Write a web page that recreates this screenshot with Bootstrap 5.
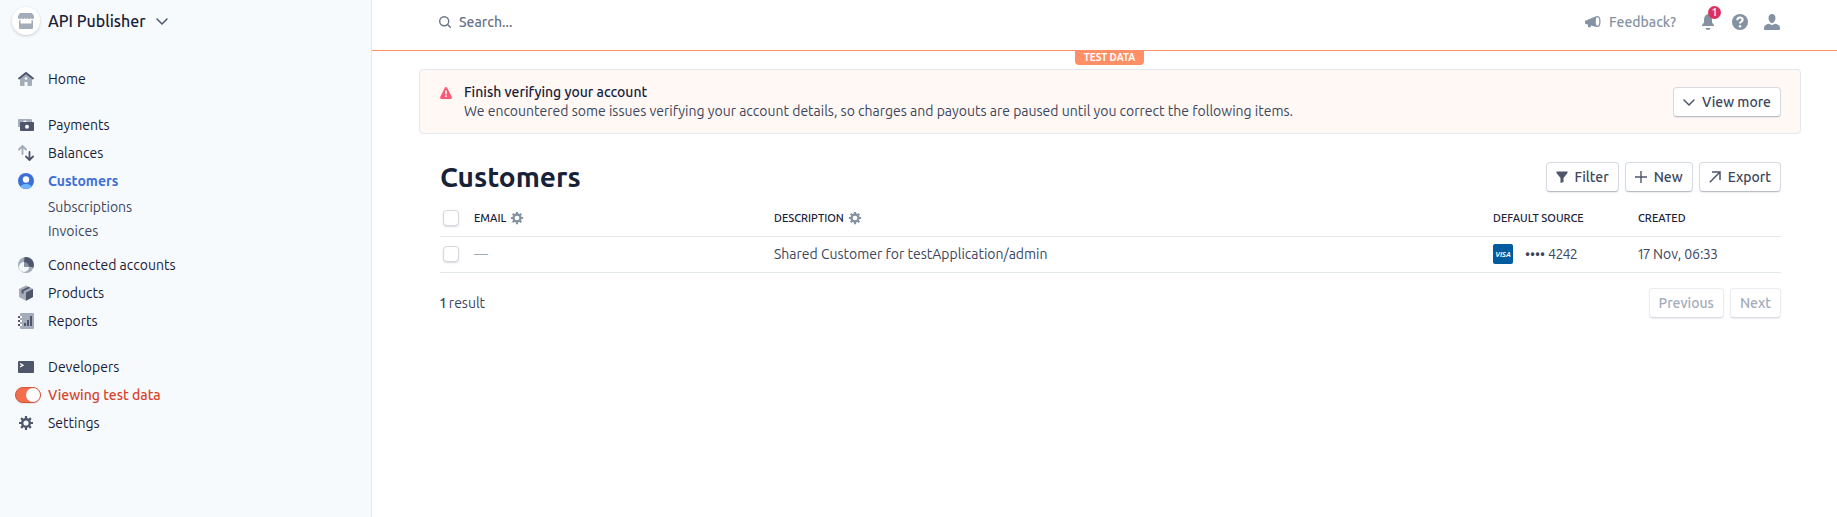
<!DOCTYPE html>
<html lang="en">
<head>
<meta charset="utf-8">
<meta name="viewport" content="width=device-width, initial-scale=1">
<title>Customers</title>
<link href="https://cdn.jsdelivr.net/npm/bootstrap@5.3.0/dist/css/bootstrap.min.css" rel="stylesheet">
<style>
  :root { --ink: #172138; --text: #3c465c; --dark: #4f566b; --light: #a3acb9; --steel: #8492a2; --line: #e3e8ee; --orange: #ff8f66; }
  body { font-family: Ubuntu, "Noto Sans", sans-serif; font-size: 14px; line-height: 20px; color: var(--text); font-variant-numeric: proportional-nums; }
  a { color: inherit; text-decoration: none; }
  svg { display: block; flex: none; }
  .fw-mid { font-weight: 500; }
  .ink { color: var(--ink); }
  .faint { color: var(--light); }
  .sidebar { width: 372px; background: #f7fafc; border-right: 1px solid var(--line); }
  .account { height: 42px; padding: 0 12px; gap: 8px; font-size: 16px; font-weight: 500; color: var(--ink); border: 0; background: none; }
  .account-logo { width: 28px; height: 28px; background: #fff; box-shadow: 0 1px 3px #3c425740; }
  .account-caret { margin-left: 2px; }
  .side-menu { padding-top: 23px; gap: 18px; }
  .side-menu a, .side-menu label { height: 28px; display: flex; align-items: center; padding-left: 18px; gap: 14px; color: var(--ink); }
  .side-menu .sub-link { height: 24px; padding-left: 48px; color: var(--text); }
  .side-menu .current { color: #3d6fd6; font-weight: 700; }
  .side-menu .test-mode { padding-left: 15px; gap: 7px; color: #d6452b; font-weight: 500; }
  .test-mode .form-check-input { width: 26px; height: 16px; margin: 0; border: 1px solid #cf5638; background-color: #f36e4d; box-shadow: 0 1px 1px #3c425720;
    background-image: none; position: relative; }
  .test-mode .form-check-input::after { content: ""; position: absolute; right: 0; top: 0; width: 14px; height: 14px; border-radius: 50%; background: #fff; }
  .topbar { height: 51px; padding: 0 57px 6px 67px; border-bottom: 1px solid var(--orange); position: relative; }
  .search-field { width: 300px; border: 0; padding: 0; outline: 0; color: var(--ink); font-weight: 500; }
  .search-field::placeholder { color: #697386; opacity: 1; }
  .top-link { color: var(--steel); }
  .count { position: absolute; left: 8px; top: -8px; width: 13px; height: 13px; border-radius: 7px; background: #dd3060; color: #fff; font-size: 11px; font-weight: 500; line-height: 12px; text-align: center; }
  .test-tag { position: absolute; top: 50px; left: 47px; right: 37px; }
  .test-tag span { background: var(--orange); color: #fff; font-size: 10px; font-weight: 700; line-height: 13px; padding: 1px 9px; border-radius: 0 0 4px 4px; }
  .page-body { padding: 18px 36px 0 47px; }
  .notice { background: #fff8f5; border: 1px solid var(--line); border-radius: 4px; padding: 13px 19px 12px 20px; }
  .notice p { line-height: 19px; }
  .tools { gap: 6px; }
  .tool { display: inline-flex; align-items: center; gap: 7px; height: 30px; padding: 0 9px; border: 1px solid #d5dbe1; border-bottom-color: #b9bec7; border-radius: 4px; background: #fff; color: var(--text); font-weight: 500; line-height: 20px; box-shadow: 0 1px 1px #3c425718; font-size: 14px; }
  .tool:disabled { color: var(--light); border-color: #e8ebef; border-bottom-color: #d9dde3; opacity: 1; background: #fff; }
  .section { padding: 28px 20px 0 21px; }
  h1 { font-size: 28px; line-height: 30px; font-weight: 700; color: var(--ink); margin: 0; }
  .customers { table-layout: fixed; margin: 8px 0 0; color: var(--text); }
  .customers > :not(caption) > * > * { padding: 0; height: 36px; vertical-align: middle; border-bottom: 1px solid var(--line); background: none; color: inherit; }
  .customers thead > tr > th { font-size: 11px; font-weight: 500; color: var(--ink); text-transform: uppercase; }
  .customers .form-check-input { width: 16px; height: 16px; margin: 0 0 0 3px; border: 1px solid #d5d9df; border-radius: 4px; box-shadow: 0 1px 2px #3c425730; display: block; }
  .col-pick { width: 34px; } .col-email { width: 300px; } .col-source { width: 145px; } .col-created { width: 143px; }
  .visa { width: 20px; height: 20px; border-radius: 2px; }
  .pager { padding-top: 15px; }
</style>
</head>
<body>
<div class="d-flex min-vh-100">
  <aside class="sidebar flex-shrink-0">
    <button class="account d-flex align-items-center" type="button">
      <span class="account-logo rounded-circle d-flex align-items-center justify-content-center">
        <svg width="16" height="16" viewBox="0 0 16 16" fill="#a3acb9"><path d="M2 0h12l2 3v1.500a1.600 1.600 0 0 1-3.200 0 1.600 1.600 0 0 1-3.200 0 1.600 1.600 0 0 1-3.200 0 1.600 1.600 0 0 1-3.200 0A1.600 1.600 0 0 1 0 4.500V3zM1 7.500l1.500-.5v3.500h11V7l1.500.5V15a1 1 0 0 1-1 1H2a1 1 0 0 1-1-1z"/></svg>
      </span>
      <span>API Publisher</span>
      <svg class="account-caret" width="12" height="12" viewBox="0 0 12 12" fill="none" stroke="#4f566b" stroke-width="1.500" stroke-linecap="round"><path d="m1 4 5 5 5-5"/></svg>
    </button>
    <nav class="side-menu d-flex flex-column">
      <div>
        <a href="#"><svg width="16" height="16" viewBox="0 0 16 16"><path fill="#a3acb9" d="M2 6.500 8 2l6 4.500V14a1 1 0 0 1-1 1H9.500v-4h-3v4H3a1 1 0 0 1-1-1z"/><circle cx="8" cy="7.500" r="1.300" fill="#f7fafc"/><path d="M1 7.500 8 2l7 5.500" fill="none" stroke="#4f566b" stroke-width="1.800" stroke-linecap="round"/></svg>Home</a>
      </div>
      <div>
        <a href="#"><svg width="16" height="16" viewBox="0 0 16 16"><path fill="#a3acb9" d="M1 2h12a1 1 0 0 1 1 1v3H2v4H1a1 1 0 0 1-1-1V3a1 1 0 0 1 1-1z"/><path d="M5 5.500a2 2 0 0 1 4 0" fill="#f7fafc"/><rect x="2" y="5" width="14" height="9" rx="1" fill="#4f566b"/><circle cx="9" cy="9.700" r="2" fill="#f7fafc"/></svg>Payments</a>
        <a href="#"><svg width="16" height="16" viewBox="0 0 16 16" fill="none" stroke-width="1.800" stroke-linecap="round" stroke-linejoin="round"><path stroke="#a3acb9" d="M1 4.500 4.500 1 8 4.500M4.500 1.500V9"/><path stroke="#4f566b" d="M8 11.500l3.500 3.500 3.500-3.500M11.500 14.500V7"/></svg>Balances</a>
        <a class="current" href="#" aria-current="page"><svg width="16" height="16" viewBox="0 0 16 16"><circle cx="8" cy="8" r="8" fill="#3d6fd6"/><circle cx="8" cy="6.500" r="3.200" fill="#fff"/><path fill="#6cb4fb" d="M2.200 13.500C4 11.500 6 11 8 11s4 .5 5.800 2.500A8 8 0 0 1 2.200 13.500z"/></svg>Customers</a>
        <a class="sub-link" href="#">Subscriptions</a>
        <a class="sub-link mb-2" href="#">Invoices</a>
        <a href="#"><svg width="16" height="16" viewBox="0 0 16 16"><circle cx="8" cy="8" r="8" fill="#a3acb9"/><path fill="#4f566b" d="M6.500 0.200A8 8 0 0 1 15.500 10.500L11 9.500H6V5z"/><path fill="#f7fafc" d="M6 5a5 5 0 1 0 5 5H6z"/><path fill="#8792a2" d="M6 5a5 5 0 0 1 5 5H6z"/></svg>Connected accounts</a>
        <a href="#"><svg width="16" height="16" viewBox="0 0 16 16"><path fill="#a3acb9" d="m1 4 7-3.500L15 4v8l-7 3.700L1 12z"/><path fill="#4f566b" d="M15 4v8l-7 3.700V7.500zM3.500 5.200 10.500 1.800l1.800.9L5.500 6.200V9l-2-1z"/></svg>Products</a>
        <a href="#"><svg width="16" height="16" viewBox="0 0 16 16"><rect x="2" width="14" height="16" rx="1" fill="#a3acb9"/><path fill="#f7fafc" d="M2 3h2v2H2zM2 7h2v2H2zM2 11h2v2H2z"/><path fill="#4f566b" d="M0 3h2v2H0zM0 7h2v2H0zM0 11h2v2H0zM6 10h2v3H6zM9 7h2v6H9zM12 3h2v10h-2z"/></svg>Reports</a>
      </div>
      <div>
        <a href="#"><svg width="16" height="16" viewBox="0 0 16 16"><rect y="2" width="16" height="12" rx="1" fill="#4f566b"/><path d="m2 4.500 3 1.700L2 8" fill="none" stroke="#fff" stroke-width="1.300"/></svg>Developers</a>
        <label class="test-mode"><input class="form-check-input rounded-pill" type="checkbox" role="switch" checked>Viewing test data</label>
        <a href="#"><svg width="16" height="16" viewBox="0 0 16 16" fill="none" stroke="#4f566b"><circle cx="8" cy="8" r="3.800" stroke-width="2.400"/><path stroke-width="2.200" d="M8 1v3M8 12v3M1 8h3M12 8h3M3.100 3.100l2 2M10.900 10.900l2 2M3.100 12.900l2-2M10.900 5.100l2-2"/></svg>Settings</a>
      </div>
    </nav>
  </aside>

  <div class="flex-grow-1">
    <header class="topbar d-flex align-items-center justify-content-between">
      <label class="d-flex align-items-center gap-2">
        <svg width="12" height="12" viewBox="0 0 12 12" fill="none" stroke="#697386" stroke-width="1.400" stroke-linecap="round"><circle cx="5.200" cy="5.200" r="4.500"/><path d="m8.600 8.600 2.700 2.700"/></svg>
        <input class="search-field" type="text" placeholder="Search..." aria-label="Search">
      </label>
      <div class="top-link d-flex align-items-center">
        <a class="d-flex align-items-center gap-2 fw-mid me-4" href="#"><svg width="16" height="16" viewBox="0 0 16 16"><path fill="#8492a2" d="M11.500 2v11L6 11.500 5.500 13.500l-2.500-.5V10.700L1 10a1 1 0 0 1-1-1V7.500a1 1 0 0 1 1-1z"/><ellipse cx="12.500" cy="7.500" rx="2.400" ry="4.900" fill="#fff" stroke="#8492a2" stroke-width="1.200"/></svg>Feedback?</a>
        <a class="position-relative me-3" href="#" aria-label="Notifications"><svg width="16" height="16" viewBox="0 0 16 16" fill="#8492a2"><path d="M8 0c3 .8 4 3 4 6v2.500l2 2.500v1H2v-1l2-2.500V6c0-3 1-5.200 4-6zM5.500 14h5a2.500 2 0 0 1-5 0z"/></svg><span class="count">1</span></a>
        <a class="me-3" href="#" aria-label="Help"><svg width="16" height="16" viewBox="0 0 16 16"><circle cx="8" cy="8" r="8" fill="#8492a2"/><path d="M5.300 6.200c0-3.600 5.400-3.300 5.400-.4C10.700 7.700 8 7.600 8 9.500" fill="none" stroke="#fff" stroke-width="2"/><circle cx="8" cy="12.200" r="1.200" fill="#fff"/></svg></a>
        <a href="#" aria-label="Profile"><svg width="16" height="16" viewBox="0 0 16 16" fill="#8492a2"><path d="M8 0c2.300 0 3.500 1.700 3.500 4S10 9 8 9 4.500 6.300 4.500 4 5.700 0 8 0zM0 14c0-2.500 2-3.500 5-4.200 1.500 1.500 4.500 1.500 6 0 3 .7 5 1.700 5 4.200v1a1 1 0 0 1-1 1H1a1 1 0 0 1-1-1z"/></svg></a>
      </div>
      <div class="test-tag d-flex justify-content-center"><span>TEST DATA</span></div>
    </header>

    <main class="page-body">
      <section class="notice d-flex align-items-center">
        <svg class="align-self-start mt-1" width="12" height="12" viewBox="0 0 12 12"><path fill="#fa5a75" d="M4.800.7a1.400 1.400 0 0 1 2.400 0l4.600 9.300a1.400 1.400 0 0 1-1.200 2H1.400a1.400 1.400 0 0 1-1.200-2z"/><path fill="#fff" d="M5.200 3.500h1.600v3.700H5.200zM5.200 8.300h1.600v1.600H5.200z"/></svg>
        <div class="flex-grow-1 ms-2 ps-1">
          <p class="m-0 fw-mid ink">Finish verifying your account</p>
          <p class="m-0">We encountered some issues verifying your account details, so charges and payouts are paused until you correct the following items.</p>
        </div>
        <button class="tool" type="button"><svg width="12" height="12" viewBox="0 0 12 12" fill="none" stroke="#4f566b" stroke-width="1.500" stroke-linecap="round"><path d="m1 4 5 5 5-5"/></svg>View more</button>
      </section>

      <section class="section">
        <div class="d-flex justify-content-between align-items-center">
          <h1>Customers</h1>
          <div class="d-flex tools">
            <button class="tool" type="button"><svg width="12" height="12" viewBox="0 0 12 12" fill="#4f566b"><path d="M.5.500h11v1.500L7.500 7v4l-3 1V7L.5 2z"/></svg>Filter</button>
            <button class="tool" type="button"><svg width="12" height="12" viewBox="0 0 12 12" stroke="#4f566b" stroke-width="1.400"><path d="M6 0v12M0 6h12"/></svg>New</button>
            <button class="tool" type="button"><svg width="12" height="12" viewBox="0 0 12 12" fill="none" stroke="#4f566b" stroke-width="1.500"><path d="M.8 11.200 11 1M3 1h8v8"/></svg>Export</button>
          </div>
        </div>
        <table class="table customers w-100">
          <colgroup><col class="col-pick"><col class="col-email"><col><col class="col-source"><col class="col-created"></colgroup>
          <thead>
            <tr>
              <th><input class="form-check-input" type="checkbox" aria-label="Select all customers"></th>
              <th><div class="d-flex align-items-center">Email<svg class="ms-1" width="14" height="14" viewBox="0 0 16 16" fill="none" stroke="#8492a2"><circle cx="8" cy="8" r="4" stroke-width="2.600"/><path stroke-width="2.400" d="M8 1v3M8 12v3M1 8h3M12 8h3M3.100 3.100l2 2M10.900 10.900l2 2M3.100 12.900l2-2M10.900 5.100l2-2"/></svg></div></th>
              <th><div class="d-flex align-items-center">Description<svg class="ms-1" width="14" height="14" viewBox="0 0 16 16" fill="none" stroke="#8492a2"><circle cx="8" cy="8" r="4" stroke-width="2.600"/><path stroke-width="2.400" d="M8 1v3M8 12v3M1 8h3M12 8h3M3.100 3.100l2 2M10.900 10.900l2 2M3.100 12.900l2-2M10.900 5.100l2-2"/></svg></div></th>
              <th>Default source</th>
              <th>Created</th>
            </tr>
          </thead>
          <tbody>
            <tr>
              <td><input class="form-check-input" type="checkbox" aria-label="Select customer"></td>
              <td><span class="faint">—</span></td>
              <td>Shared Customer for testApplication/admin</td>
              <td><div class="d-flex align-items-center"><svg class="visa me-2" viewBox="0 0 20 20"><rect width="20" height="20" fill="#005b9f"/><text x="10" y="12.500" text-anchor="middle" font-size="7" font-weight="700" font-style="italic" fill="#fff">VISA</text></svg><span class="ms-1">•••• 4242</span></div></td>
              <td>17 Nov, 06:33</td>
            </tr>
          </tbody>
        </table>
        <div class="pager d-flex justify-content-between align-items-center">
          <span><span class="fw-mid">1</span> result</span>
          <div class="d-flex tools">
            <button class="tool" type="button" disabled>Previous</button>
            <button class="tool" type="button" disabled>Next</button>
          </div>
        </div>
      </section>
    </main>
  </div>
</div>
<script src="https://cdn.jsdelivr.net/npm/bootstrap@5.3.0/dist/js/bootstrap.bundle.min.js"></script>
</body>
</html>
